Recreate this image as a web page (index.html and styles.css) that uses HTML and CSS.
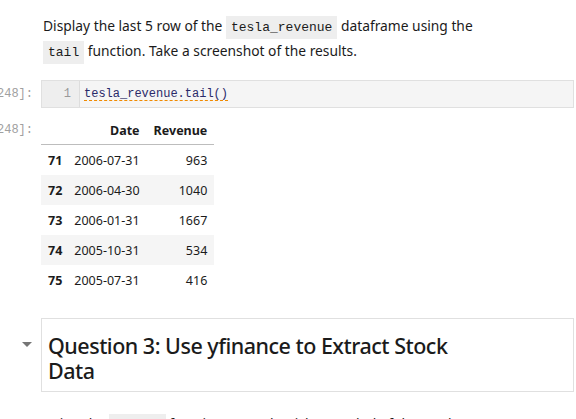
FILE: index.html
```html
<!DOCTYPE html>
<html>
<head>
<meta charset="utf-8">
<link rel="stylesheet" href="styles.css">
</head>
<body>
<div class="notebook">
  <div class="cell md-cell">
    <div class="prompt"></div>
    <div class="md">
      <p>Display the last 5 row of the <code>tesla_revenue</code> dataframe using the <code>tail</code> function. Take a screenshot of the results.</p>
    </div>
  </div>

  <div class="cell code-cell">
    <div class="prompt"><span>[248]:</span></div>
    <div class="editor">
      <div class="gutter">1</div>
      <div class="code"><span class="squig">tesla_revenue.tail()</span></div>
    </div>
  </div>

  <div class="cell out-cell">
    <div class="prompt"><span>[248]:</span></div>
    <div class="output">
      <table class="df">
        <thead>
          <tr><th></th><th>Date</th><th>Revenue</th></tr>
        </thead>
        <tbody>
          <tr><th>71</th><td>2006-07-31</td><td>963</td></tr>
          <tr><th>72</th><td>2006-04-30</td><td>1040</td></tr>
          <tr><th>73</th><td>2006-01-31</td><td>1667</td></tr>
          <tr><th>74</th><td>2005-10-31</td><td>534</td></tr>
          <tr><th>75</th><td>2005-07-31</td><td>416</td></tr>
        </tbody>
      </table>
    </div>
  </div>

  <div class="cell heading-cell">
    <div class="prompt collapser"><span class="tri"></span></div>
    <div class="heading-box">
      <h2>Question 3: Use yfinance to Extract Stock Data</h2>
    </div>
  </div>

  <div class="cell md-cell next">
    <div class="prompt"></div>
    <div class="md">
      <p>Using the <code>Ticker</code> function enter the ticker symbol of the stock we want to extract data on to create a ticker object.</p>
    </div>
  </div>
</div>
</body>
</html>
```
FILE: styles.css
```css
html, body {
  margin: 0;
  padding: 0;
  background: #fff;
}
body {
  font-family: "Noto Sans", "Open Sans", sans-serif;
  color: #1b1b1b;
  overflow: hidden;
  width: 576px;
  height: 419px;
}
.notebook {
  display: flex;
  flex-direction: column;
  padding-top: 13px;
}
.cell {
  display: flex;
  align-items: flex-start;
}
.prompt {
  width: 33px;
  flex: none;
  margin-right: 8px;
  display: flex;
  justify-content: flex-end;
  overflow: hidden;
  white-space: nowrap;
  font-family: "Liberation Mono", "DejaVu Sans Mono", monospace;
  font-size: 12px;
  color: #a0a0a0;
}
.md {
  padding-left: 2px;
  flex: 1;
  min-width: 0;
}
.md p {
  margin: 0;
  font-size: 13.8px;
  line-height: 25px;
  width: 470px;
}
code {
  font-family: "Liberation Mono", "DejaVu Sans Mono", monospace;
  font-size: 13px;
  line-height: 1;
  background: #eeeeee;
  padding: 4px 5px;
  color: #1b1b1b;
}
.code-cell {
  margin-top: 17px;
}
.code-cell .prompt {
  line-height: 28px;
}
.editor {
  flex: 1;
  display: flex;
  height: 26px;
  border: 1px solid #e0e0e0;
  background: #f5f5f5;
  margin-right: 2px;
}
.gutter {
  width: 29px;
  padding-right: 8px;
  text-align: right;
  background: #eeeeee;
  border-right: 1px solid #dddddd;
  font-family: "Liberation Mono", "DejaVu Sans Mono", monospace;
  font-size: 12px;
  line-height: 26px;
  color: #999;
}
.code {
  padding-left: 4px;
  font-family: "Liberation Mono", "DejaVu Sans Mono", monospace;
  font-size: 12px;
  line-height: 26px;
  color: #1b1b1b;
}
.squig {
  text-decoration: underline dashed #f08a00;
  text-underline-offset: 3px;
  color: #2a2a6a;
}
.out-cell {
  margin-top: 10px;
}
.out-cell .prompt {
  line-height: 24px;
}
.df {
  border-collapse: collapse;
  font-size: 12.5px;
  color: #1b1b1b;
}
.df th, .df td {
  padding: 0 7px;
  text-align: right;
  height: 30px;
  white-space: nowrap;
}
.df thead th {
  height: 25px;
  padding-top: 1px;
  border-bottom: 1px solid #bdbdbd;
  font-weight: bold;
  vertical-align: top;
  line-height: 24px;
}
.df tbody th {
  font-weight: bold;
  text-align: left;
}
.df tbody td:nth-child(2) {
  padding-left: 5px;
}
.df tbody td:nth-child(3) {
  padding-left: 24px;
}
.df tbody tr:nth-child(even) {
  background: #f5f5f5;
}
.heading-cell {
  margin-top: 23px;
}
.collapser {
  padding-top: 24px;
  padding-left: 22px;
  width: 11px;
  box-sizing: content-box;
  justify-content: flex-start;
}
.tri {
  width: 0;
  height: 0;
  border-left: 5px solid transparent;
  border-right: 5px solid transparent;
  border-top: 5px solid #757575;
}
.heading-box {
  flex: 1;
  border: 1px solid #e0e0e0;
  margin-right: 2px;
  padding: 14px 6px 8px;
}
.heading-box h2 {
  margin: 0;
  font-size: 21.5px;
  font-weight: 500;
  letter-spacing: -0.5px;
  line-height: 25px;
  width: 430px;
  color: #1b1b1b;
}
.next {
  margin-top: 19px;
}
```
